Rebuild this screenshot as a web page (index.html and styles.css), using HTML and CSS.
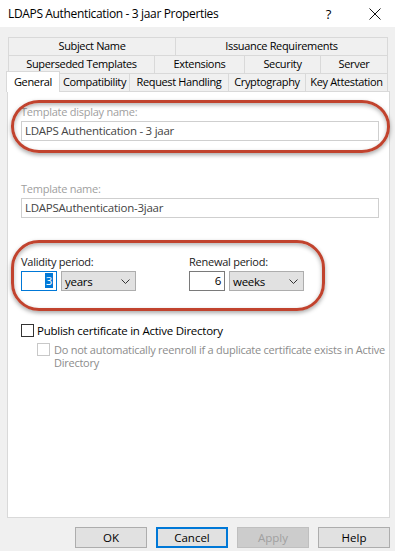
FILE: index.html
```html
<!DOCTYPE html>
<html lang="en">
<head>
  <meta charset="UTF-8" />
  <meta name="viewport" content="width=device-width, initial-scale=1.0" />
  <title>LDAPS Authentication - 3 jaar Properties</title>
  <link rel="stylesheet" href="styles.css">
</head>
<body>
  <div class="window">
    <header class="titlebar">
      <span class="title">LDAPS Authentication - 3 jaar Properties</span>
      <span class="help-q">?</span>
      <svg class="close-x" width="12" height="12" viewBox="0 0 12 12"><path d="M0.5 0.5L11.5 11.5M11.5 0.5L0.5 11.5" stroke="#111" stroke-width="1" fill="none"/></svg>
    </header>

    <nav class="tabs">
      <div class="tab-row row1">
        <div class="tab" style="width:168px">Subject Name</div>
        <div class="tab" style="width:212px">Issuance Requirements</div>
      </div>
      <div class="tab-row row2">
        <div class="tab" style="width:147px">Superseded Templates</div>
        <div class="tab" style="width:90px">Extensions</div>
        <div class="tab" style="width:76px">Security</div>
        <div class="tab" style="width:67px">Server</div>
      </div>
      <div class="tab-row row3">
        <div class="tab active" style="width:54px">General</div>
        <div class="tab" style="width:70px">Compatibility</div>
        <div class="tab" style="width:99px">Request Handling</div>
        <div class="tab" style="width:77px">Cryptography</div>
        <div class="tab" style="width:82px">Key Attestation</div>
      </div>
    </nav>

    <main class="panel">
      <label class="field-label dim first">Template display name:</label>
      <div class="textbox">LDAPS Authentication - 3 jaar</div>

      <label class="field-label dim second">Template name:</label>
      <div class="textbox">LDAPSAuthentication-3jaar</div>

      <div class="periods">
        <div class="period validity">
          <label class="field-label">Validity period:</label>
          <div class="period-inputs">
            <div class="num focused"><span class="sel">3</span></div>
            <div class="combo">years<svg class="chev" width="9" height="5" viewBox="0 0 9 5"><path d="M0.5 0.5L4.5 4.5L8.5 0.5" stroke="#333" fill="none"/></svg></div>
          </div>
        </div>
        <div class="period">
          <label class="field-label">Renewal period:</label>
          <div class="period-inputs">
            <div class="num">6</div>
            <div class="combo">weeks<svg class="chev" width="9" height="5" viewBox="0 0 9 5"><path d="M0.5 0.5L4.5 4.5L8.5 0.5" stroke="#333" fill="none"/></svg></div>
          </div>
        </div>
      </div>

      <div class="check publish"><span class="box"></span>Publish certificate in Active Directory</div>
      <div class="check sub disabled"><span class="box"></span><span>Do not automatically reenroll if a duplicate certificate exists in Active Directory</span></div>

      <div class="mark mark1"></div>
      <div class="mark mark2"></div>
    </main>

    <footer class="buttons">
      <button class="btn">OK</button>
      <button class="btn default">Cancel</button>
      <button class="btn" disabled>Apply</button>
      <button class="btn">Help</button>
    </footer>
  </div>
</body>
</html>
```

FILE: styles.css
```css
*,*::before,*::after{box-sizing:border-box;margin:0;padding:0}
body{font-family:'Open Sans','Noto Sans',sans-serif;font-size:11px;letter-spacing:-.25px;color:#000;background:#f0f0f0;width:395px;height:551px;overflow:hidden}

.titlebar{height:27px;background:#fff;display:flex;align-items:center;padding-left:8px}
.title{font-size:12px;letter-spacing:-.35px;flex:1}
.help-q{font-size:13px;margin-right:38px}
.close-x{margin-right:14px}

.tabs{margin-top:10px}
.tab-row{display:flex;height:18px;padding-left:8px}
.tab{flex:none;height:18px;line-height:16px;text-align:center;white-space:nowrap;border:1px solid #d9d9d9;border-left:none;border-bottom:none;background:#f0f0f0;letter-spacing:-.35px}
.tab:first-child{border-left:1px solid #d9d9d9}
.row3{padding-left:6px}
.tab.active{background:#fff;height:21px;margin-top:-2px;position:relative;z-index:2;line-height:19px}

.panel{position:relative;margin-left:7px;width:383px;height:427px;background:#fff;border:1px solid #d9d9d9;padding-left:13px}
.field-label{display:block;line-height:15px;color:#1a1a1a}
.field-label.dim{color:#a0a0a0}
.field-label.first{margin-top:12px}
.field-label.second{margin-top:40px}
.textbox{width:358px;height:20px;margin-top:2px;border:1px solid #cfcfcf;line-height:18px;padding-left:3px;color:#444;font-size:11.5px}

.periods{display:flex;margin-top:36px}
.validity{width:168px}
.period-inputs{display:flex;gap:4px;margin-top:2px}
.num{width:36px;height:20px;border:1px solid #7a7a7a;text-align:right;padding-right:3px;line-height:18px;font-size:11.5px}
.num.focused{border-color:#0078d7}
.sel{background:#0078d7;color:#fff;padding:0 1px}
.combo{width:75px;height:20px;background:#e1e1e1;border:1px solid #adadad;display:flex;align-items:center;justify-content:space-between;padding:0 5px 0 3px;font-size:11.5px}

.check{display:flex;align-items:flex-start;line-height:15px}
.check .box{flex:none;width:13px;height:13px;border:1px solid #333;background:#fff;margin:1px 3px 0 0}
.publish{margin-top:32px;font-size:11.5px}
.sub{margin-top:5px;padding-left:16px;line-height:13px;color:#8c8c8c;width:364px}
.sub .box{border-color:#c8c8c8;margin-top:0;margin-right:4px}

.mark{position:absolute;border:3px solid #c1432e;box-shadow:0 2px 4px rgba(0,0,0,.35),inset 0 2px 4px rgba(0,0,0,.3);pointer-events:none}
.mark1{left:3px;top:8px;width:379px;height:53px;border-radius:28px/26px}
.mark2{left:3px;top:148px;width:314px;height:71px;border-radius:28px}

.buttons{display:flex;justify-content:flex-end;gap:9px;padding-right:5px;margin-top:9px}
.btn{width:72px;height:21px;font:inherit;font-size:11.5px;background:#e1e1e1;border:1px solid #adadad;color:#000}
.btn.default{border:2px solid #0078d7}
.btn[disabled]{background:#cccccc;border-color:#bfbfbf;color:#a0a0a0}
```
